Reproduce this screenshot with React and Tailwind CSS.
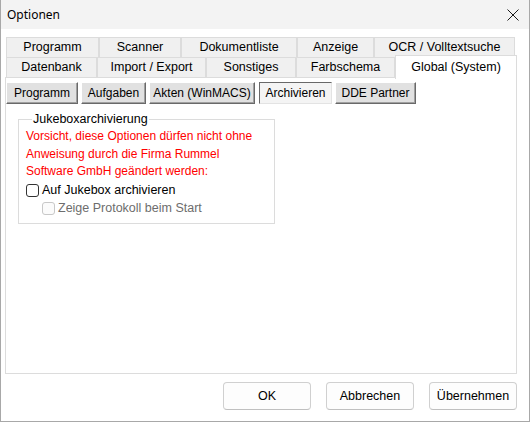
import React, { useState } from "react";

const topTabs = [
  { label: "Programm", w: "w-[93px]" },
  { label: "Scanner", w: "w-[82px]" },
  { label: "Dokumentliste", w: "w-[116px]" },
  { label: "Anzeige", w: "w-[77px]" },
  { label: "OCR / Volltextsuche", w: "w-[141px]" },
];

const frontTabs = [
  { label: "Datenbank", w: "w-[91px]" },
  { label: "Import / Export", w: "w-[109px]" },
  { label: "Sonstiges", w: "w-[90px]" },
  { label: "Farbschema", w: "w-[99px]" },
];

const subTabs = [
  { label: "Programm", w: "w-[72px]", mr: "mr-[3px]" },
  { label: "Aufgaben", w: "w-[65px]", mr: "mr-[3px]" },
  { label: "Akten (WinMACS)", w: "w-[106px]", mr: "mr-[4px]" },
  { label: "Archivieren", w: "w-[73px]", mr: "mr-[3px]" },
  { label: "DDE Partner", w: "w-[81px]", mr: "" },
];

const Checkbox = ({ checked, disabled, onChange }) => (
  <span
    onClick={disabled ? undefined : onChange}
    className={
      "inline-flex w-[13px] h-[13px] rounded-[3px] border items-center justify-center shrink-0 " +
      (disabled ? "border-[#c8c8c8] bg-[#fbfbfb]" : "border-[#333333] bg-white")
    }
  >
    {checked && (
      <svg width="9" height="9" viewBox="0 0 9 9">
        <path d="M1.5 4.5 L3.6 6.6 L7.5 2.2" fill="none" stroke="#000" strokeWidth="1.2" />
      </svg>
    )}
  </span>
);

const App = () => {
  const [activeSub, setActiveSub] = useState("Archivieren");
  const [jukebox, setJukebox] = useState(false);

  return (
    <div
      className="w-[530px] h-[422px] bg-white border-l border-r border-b border-[#a8a8a8] flex flex-col text-black"
      style={{ fontFamily: '"Liberation Sans", Arial, sans-serif' }}
    >
      {/* title bar */}
      <div className="h-[29px] bg-[#f3f3f3] flex items-center justify-between pl-[6px] pr-[10px] shrink-0">
        <span className="text-[12px]" style={{ fontFamily: '"Noto Sans", sans-serif' }}>
          Optionen
        </span>
        <svg width="12" height="12" viewBox="0 0 12 12">
          <path d="M0.5 0.5 L11.5 11.5 M11.5 0.5 L0.5 11.5" stroke="#1a1a1a" strokeWidth="1" />
        </svg>
      </div>

      {/* tab control */}
      <div className="pl-[4px] pt-[8px] flex flex-col text-[12.5px] whitespace-nowrap">
        <div className="flex pl-[1px] h-[20px]">
          {topTabs.map((t) => (
            <div
              key={t.label}
              className={`${t.w} h-[20px] bg-[#f0f0f0] border-t border-l border-r border-[#dcdcdc] flex items-center justify-center`}
            >
              {t.label}
            </div>
          ))}
        </div>
        <div className="flex pl-[1px] h-[20px] relative z-10">
          {frontTabs.map((t) => (
            <div
              key={t.label}
              className={`${t.w} h-[20px] bg-[#f0f0f0] border-t border-l border-r border-[#dcdcdc] flex items-center justify-center`}
            >
              {t.label}
            </div>
          ))}
          <div className="w-[122px] h-[24px] -mt-[2px] bg-white border-t border-l border-r border-[#dcdcdc] flex items-start pt-[2px] justify-center">
            Global (System)
          </div>
        </div>

        <div className="w-[512px] h-[297px] border border-[#dcdcdc] bg-white flex flex-col">
          <div className="flex pt-[4px] text-[12px]">
            {subTabs.map((t) => {
              const on = t.label === activeSub;
              return (
                <button
                  key={t.label}
                  onClick={() => setActiveSub(t.label)}
                  className={
                    `${t.w} ${t.mr} h-[22px] flex items-center justify-center ` +
                    (on
                      ? "bg-[#f4f4f4] border-t border-l border-[#696969] border-b border-r border-b-[#e3e3e3] border-r-[#e3e3e3]"
                      : "bg-[#e1e1e1] border-t border-l border-[#ffffff] border-b border-r border-b-[#696969] border-r-[#696969] shadow-[inset_-1px_-1px_0_#a0a0a0]")
                  }
                >
                  {t.label}
                </button>
              );
            })}
          </div>

          <fieldset className="ml-[12px] mt-[8px] w-[257px] h-[112px] border border-[#dcdcdc] pl-[7px] pr-[4px]">
            <legend className="px-[1px] ml-[6px] leading-[15px]">Jukeboxarchivierung</legend>
            <div className="text-[12px] leading-[17.5px] text-[#ff0000] mt-[1px]">
              Vorsicht, diese Optionen dürfen nicht ohne
              <br />
              Anweisung durch die Firma Rummel
              <br />
              Software GmbH geändert werden:
            </div>
            <label className="flex items-center gap-[3px] mt-[1px] h-[17px]">
              <Checkbox checked={jukebox} onChange={() => setJukebox(!jukebox)} />
              <span>Auf Jukebox archivieren</span>
            </label>
            <label className="flex items-center gap-[3px] mt-[1px] ml-[16px] h-[17px] text-[#6d6d6d]">
              <Checkbox disabled />
              <span>Zeige Protokoll beim Start</span>
            </label>
          </fieldset>
        </div>
      </div>

      {/* bottom buttons */}
      <div className="flex justify-end gap-[15px] pr-[12px] mt-[8px] text-[12.5px]">
        {["OK", "Abbrechen", "Übernehmen"].map((b) => (
          <button
            key={b}
            className="w-[88px] h-[28px] rounded-[4px] bg-[#fdfdfd] border border-[#d0d0d0] border-b-[#c0c0c0] flex items-center justify-center"
          >
            {b}
          </button>
        ))}
      </div>
    </div>
  );
};

export default App;
